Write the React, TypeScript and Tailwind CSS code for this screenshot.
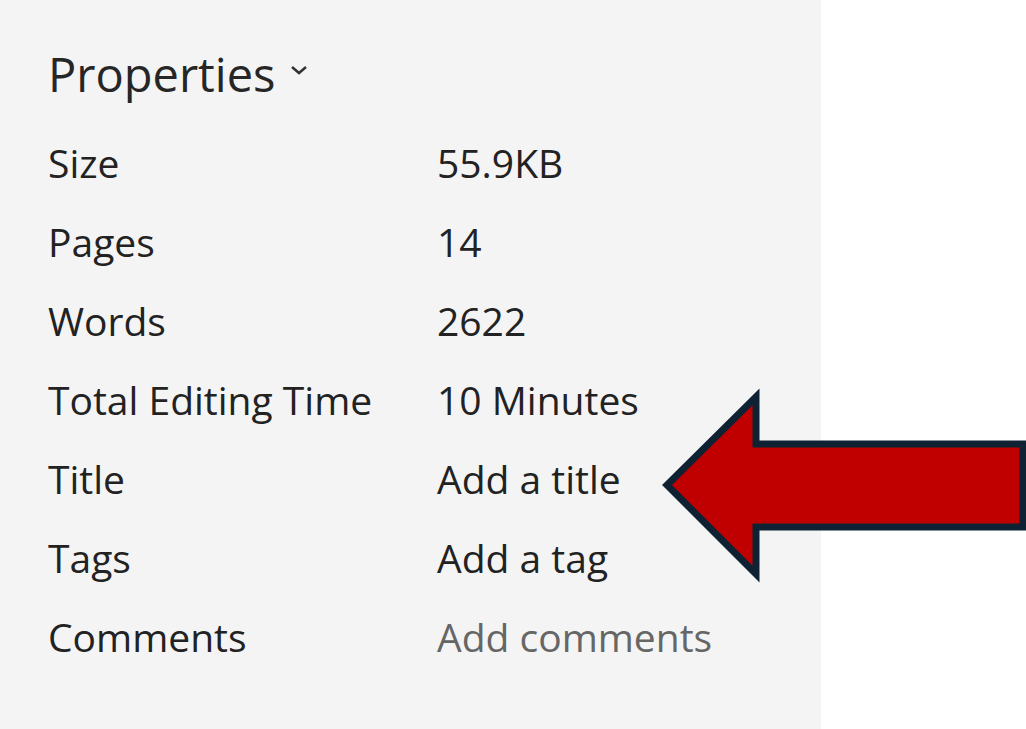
const rows = [
  { label: "Size", value: "55.9KB" },
  { label: "Pages", value: "14" },
  { label: "Words", value: "2622" },
  { label: "Total Editing Time", value: "10 Minutes" },
  { label: "Title", value: "Add a title" },
  { label: "Tags", value: "Add a tag" },
  { label: "Comments", value: "Add comments", muted: true },
];

export default function App() {
  return (
    <div className="relative flex h-[729px] w-[1026px] overflow-hidden bg-white font-['Open_Sans',sans-serif]">
      {/* Properties pane */}
      <div className="h-full w-[821px] bg-[#f4f4f4] pl-[48px] pt-[44px]">
        <div className="flex items-center gap-[14px] text-[47px] leading-[60px] text-[#262626]">
          <span>Properties</span>
          <svg width="18" height="12" viewBox="0 0 18 12" className="mt-[-8px]">
            <path d="M2 3 L9 9 L16 3" fill="none" stroke="#333" strokeWidth="2.5" />
          </svg>
        </div>
        <div className="mt-[19px] grid grid-cols-[389px_1fr] text-[39px] text-[#222]">
          {rows.map((row) => (
            <div key={row.label} className="contents">
              <div className="h-[79px] leading-[79px]">{row.label}</div>
              <div className={"h-[79px] leading-[79px] " + (row.muted ? "text-[#666]" : "")}>{row.value}</div>
            </div>
          ))}
        </div>
      </div>

      {/* Callout arrow */}
      <svg className="absolute left-0 top-0" width="1026" height="729" viewBox="0 0 1026 729">
        <polygon
          points="667,485 756,397 756,444 1023,444 1023,527 756,527 756,574"
          fill="#c00000"
          stroke="#0f2233"
          strokeWidth="7"
          strokeLinejoin="miter"
        />
      </svg>
    </div>
  );
}
